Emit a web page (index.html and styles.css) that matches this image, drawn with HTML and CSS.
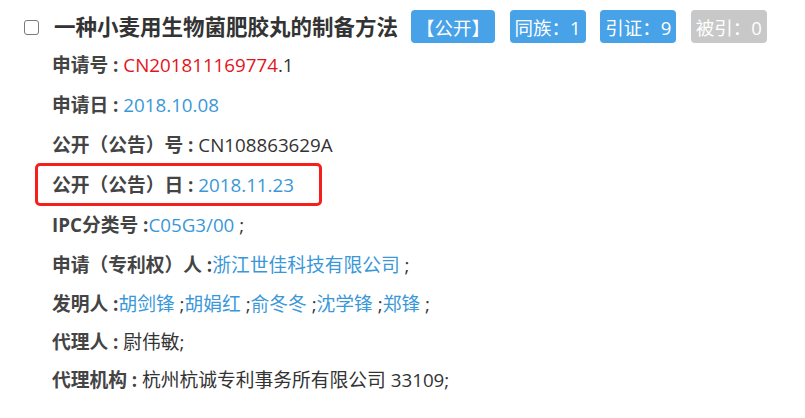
FILE: index.html
```html
<!DOCTYPE html>
<html lang="zh-CN">
<head>
<meta charset="utf-8">
<title>专利</title>
<link rel="stylesheet" href="styles.css">
</head>
<body>
<div class="item">
  <div class="head">
    <input type="checkbox" class="check">
    <h1 class="title">一种小麦用生物菌肥胶丸的制备方法</h1>
    <span class="badge">【公开】</span>
    <span class="badge">同族：1</span>
    <span class="badge">引证：9</span>
    <span class="badge badge-off">被引：0</span>
  </div>
  <div class="rows">
    <div class="row"><b class="lbl">申请号 : </b><span class="red">CN201811169774</span>.1</div>
    <div class="row"><b class="lbl">申请日 : </b><span class="blue">2018.10.08</span></div>
    <div class="row"><b class="lbl">公开（公告）号 : </b>CN108863629A</div>
    <div class="row row-mark"><span class="mark"></span><b class="lbl">公开（公告）日 : </b><span class="blue">2018.11.23</span></div>
    <div class="row"><b class="lbl">IPC分类号 :</b><span class="blue">C05G3/00</span> ;</div>
    <div class="row"><b class="lbl">申请（专利权）人 :</b><span class="blue">浙江世佳科技有限公司</span> ;</div>
    <div class="row row-tight"><b class="lbl">发明人 :</b><span class="blue">胡剑锋</span> ;<span class="blue">胡娟红</span> ;<span class="blue">俞冬冬</span> ;<span class="blue">沈学锋</span> ;<span class="blue">郑锋</span> ;</div>
    <div class="row row-tight"><b class="lbl">代理人 : </b>尉伟敏;</div>
    <div class="row row-tight"><b class="lbl">代理机构 : </b>杭州杭诚专利事务所有限公司 33109;</div>
  </div>
</div>
</body>
</html>
```

FILE: styles.css
```css
html, body {
  margin: 0;
  padding: 0;
  background: #fff;
}
body {
  font-family: "Open Sans", "Noto Sans CJK SC", sans-serif;
  color: #333;
}
.item {
  padding: 10px 0 0 24px;
}
.head {
  display: flex;
  align-items: center;
  height: 33px;
}
.check {
  appearance: none;
  -webkit-appearance: none;
  margin: 1px 15px 0 0;
  width: 15px;
  height: 15px;
  border: 1px solid #7a7a7a;
  border-radius: 3px;
  background: #fff;
  box-sizing: border-box;
}
.title {
  margin: 0 13px 0 0;
  font-size: 21.5px;
  font-weight: 700;
  line-height: 33px;
  color: #333;
  white-space: nowrap;
}
.badge {
  display: inline-flex;
  align-items: center;
  height: 33px;
  padding: 0 5px;
  margin-right: 14.5px;
  background: #48a2e8;
  color: #fff;
  font-size: 18.5px;
  border-radius: 4px;
  white-space: nowrap;
}
.badge-off {
  background: #c8c8c8;
}
.rows {
  padding: 2px 0 0 28px;
}
.row {
  position: relative;
  height: 40px;
  line-height: 40px;
  font-size: 18.75px;
  white-space: pre;
  color: #333;
}
.row-tight {
  height: 38px;
  line-height: 38px;
}
.lbl {
  font-weight: 700;
  color: #444;
}
.red {
  color: #e3141b;
}
.blue {
  color: #3a98d8;
}
.mark {
  position: absolute;
  left: -17px;
  top: -2px;
  width: 287px;
  height: 43px;
  box-sizing: border-box;
  border: 3.5px solid #f5201c;
  border-radius: 5px;
}
```
